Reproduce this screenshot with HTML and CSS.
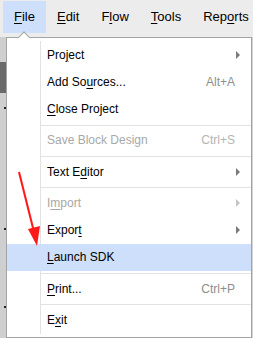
FILE: index.html
```html
<!DOCTYPE html>
<html lang="en">
  <head>
    <meta charset="UTF-8" />
    <title>File menu</title>
    <link rel="stylesheet" href="styles.css">
  </head>
  <body>
    <div class="menubar">
      <span class="top-item open"><u>F</u>ile</span>
      <span class="top-item"><u>E</u>dit</span>
      <span class="top-item">F<u>l</u>ow</span>
      <span class="top-item"><u>T</u>ools</span>
      <span class="top-item">Rep<u>o</u>rts</span>
    </div>
    <div class="workspace">
      <div class="side">
        <div class="side-block"></div>
        <span class="dot d1"></span>
        <span class="dot d2"></span>
        <span class="dot d3"></span>
      </div>
      <div class="menu">
        <span class="notch"></span>
        <div class="item">Pro<u>j</u>ect<span class="sub"></span></div>
        <div class="item">Add So<u>u</u>rces...<span class="key">Alt+A</span></div>
        <div class="item"><u>C</u>lose Project</div>
        <div class="sep"></div>
        <div class="item disabled">Save Block Design<span class="key">Ctrl+S</span></div>
        <div class="sep"></div>
        <div class="item">Text E<u>d</u>itor<span class="sub"></span></div>
        <div class="sep"></div>
        <div class="item disabled">I<u>m</u>port<span class="sub"></span></div>
        <div class="item">Expor<u>t</u><span class="sub"></span></div>
        <div class="item active"><u>L</u>aunch SDK</div>
        <div class="sep"></div>
        <div class="item"><u>P</u>rint...<span class="key">Ctrl+P</span></div>
        <div class="sep"></div>
        <div class="item">E<u>x</u>it</div>
      </div>
    </div>
    <!-- red annotation arrow -->
    <svg class="arrow" width="253" height="338" viewBox="0 0 253 338">
      <line x1="19" y1="172" x2="34" y2="232" stroke="#ff1a1a" stroke-width="2" />
      <polygon points="37,246 28,229 40,226" fill="#ff1a1a" />
    </svg>
  </body>
</html>
```

FILE: styles.css
```css
body {
  margin: 0;
  width: 253px;
  height: 338px;
  overflow: hidden;
  position: relative;
  font-family: "Liberation Sans", Arial, sans-serif;
  background-color: #d4d4d4;
}

u {
  text-decoration: underline;
  text-underline-offset: 2px;
}

/* Barra de menus */
.menubar {
  display: flex;
  height: 37px;
  padding: 1px 0 0 3px;
  box-sizing: border-box;
  background-color: #ececec;
  font-size: 13px;
  color: #000;
}

.top-item {
  height: 32px;
  line-height: 32px;
  padding: 0 11px;
}

.top-item.open {
  background-color: #cddffa;
}

/* Zona de abajo */
.workspace {
  display: flex;
  align-items: flex-start;
  height: 301px;
}

.side {
  width: 6px;
  height: 100%;
  position: relative;
  background-color: #cfcfcf;
}

.side-block {
  margin-top: 25px;
  height: 31px;
  background-color: #6a6a6a;
}

.dot {
  position: absolute;
  left: 4px;
  width: 2px;
  height: 2px;
  background-color: #222;
}

.d1 { top: 70px; }
.d2 { top: 191px; }
.d3 { top: 269px; }

/* Menu desplegable */
.menu {
  position: relative;
  width: 244px;
  padding: 3px 0;
  border: 1px solid #a3a3a3;
  background: linear-gradient(to right, transparent 33px, #e2e2e2 33px, #e2e2e2 34px, transparent 34px) no-repeat 0 3px / 100% calc(100% - 6px);
  background-color: #fff;
  font-size: 12px;
}

.notch {
  position: absolute;
  top: -5px;
  left: 13px;
  width: 7px;
  height: 7px;
  background-color: #fff;
  border-top: 1px solid #a3a3a3;
  border-left: 1px solid #a3a3a3;
  transform: rotate(45deg);
}

.item {
  display: flex;
  align-items: center;
  height: 27.25px;
  padding: 0 16px 0 40px;
  color: #000;
}

.item.disabled {
  color: #a8a8a8;
}

.item.active {
  background-color: #cddffa;
}

.key {
  margin-left: auto;
  color: #8e8e8e;
}

.disabled .key {
  color: #b4b4b4;
}

.sub {
  margin-left: auto;
  margin-right: -5px;
  width: 0;
  height: 0;
  border-top: 4px solid transparent;
  border-bottom: 4px solid transparent;
  border-left: 4px solid #7a7a7a;
}

.disabled .sub {
  border-left-color: #c4c4c4;
}

.sep {
  height: 1px;
  margin: 2px 0 1px 34px;
  background-color: #e2e2e2;
}

.arrow {
  position: absolute;
  top: 0;
  left: 0;
  pointer-events: none;
}
```
